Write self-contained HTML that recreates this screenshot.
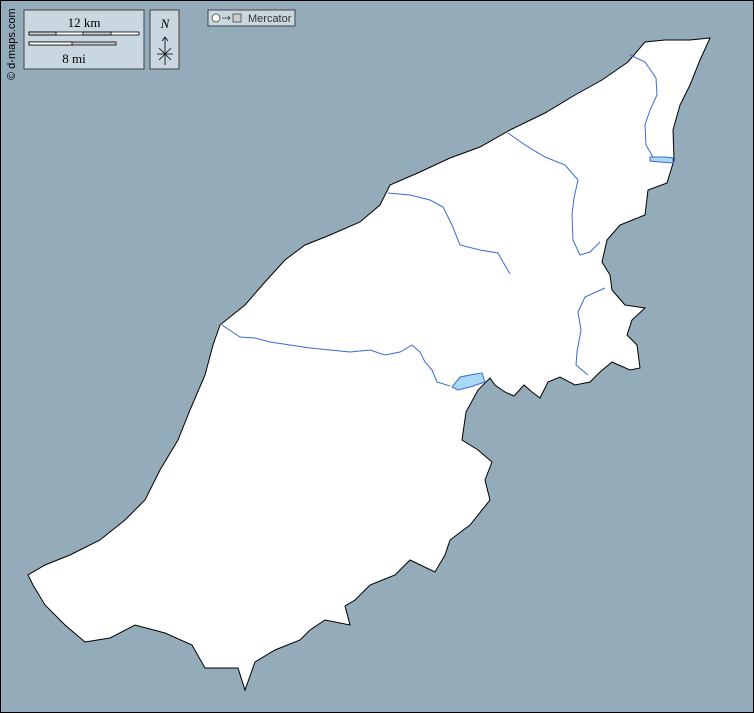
<!DOCTYPE html><html><head><meta charset="utf-8"><style>
body{margin:0}
svg{display:block}
</style></head><body>
<svg width="754" height="713" viewBox="0 0 754 713" xmlns="http://www.w3.org/2000/svg">
<rect x="0" y="0" width="754" height="713" fill="#94abba"/>
<rect x="0.5" y="0.5" width="753" height="712" fill="none" stroke="#000" stroke-width="1"/>
<path fill="#fff" stroke="#000" stroke-width="1" d="M710,38 L700,60 L690,85 L680,105 L673,130 L674,160 L667,183 L648,190 L645,215 L620,225 L607,240 L602,262 L610,275 L612,290 L625,305 L645,308 L632,320 L627,335 L637,345 L640,368 L630,370 L612,362 L600,372 L590,382 L575,385 L560,377 L548,382 L540,398 L532,392 L524,385 L514,396 L505,392 L495,385 L490,378 L478,390 L466,412 L462,440 L470,445 L478,450 L492,462 L485,480 L490,500 L470,525 L450,540 L445,555 L435,572 L410,560 L395,575 L370,585 L355,600 L345,606 L350,625 L325,620 L310,630 L300,640 L275,650 L255,662 L245,690 L238,668 L205,668 L192,645 L165,633 L135,625 L110,638 L85,642 L65,625 L45,605 L33,585 L28,575 L45,565 L70,555 L100,540 L125,520 L145,500 L160,470 L178,440 L190,410 L205,375 L213,345 L220,325 L245,305 L265,282 L285,260 L305,245 L330,235 L360,222 L380,205 L390,185 L420,172 L450,158 L480,147 L510,130 L545,113 L575,95 L602,80 L628,62 L645,42 L665,40 L690,40 Z"/>
<g fill="none" stroke="#3a6bd0" stroke-width="1">
<path d="M222,325 L240,337 L255,338 L270,342 L290,345 L310,348 L330,350 L350,352 L370,350 L385,355 L400,352 L412,345 L420,352 L425,362 L432,370 L437,382 L450,386"/>
<path d="M388,193 L410,195 L430,200 L443,207 L452,225 L460,245 L480,250 L498,253 L503,262 L510,274"/>
<path d="M508,133 L525,145 L545,157 L565,165 L578,180 L574,198 L572,215 L573,240 L580,255 L590,252 L600,242"/>
<path d="M630,55 L645,62 L656,78 L657,95 L650,110 L645,125 L646,145 L653,157"/>
<path d="M605,288 L585,297 L578,312 L581,330 L577,352 L576,365 L588,375"/>
</g>
<path fill="#a8d8f4" stroke="#3a6bd0" stroke-width="1" d="M452,387 L460,377 L475,374 L482,373 L485,382 L470,387 L458,390 Z"/>
<path fill="#a8d8f4" stroke="#3a6bd0" stroke-width="1" d="M650,157 L665,157 L673,158 L673,163 L660,162 L650,161 Z"/>
<rect x="24" y="10" width="120" height="59" fill="#c8d7e0" stroke="#444" stroke-width="1"/>
<text x="84" y="27" font-family="Liberation Serif,serif" font-size="13" text-anchor="middle">12 km</text>
<rect x="29" y="32" width="110" height="3" fill="#fff" stroke="#000" stroke-width="0.8"/>
<rect x="29" y="32" width="27" height="3" fill="#ccc" stroke="#000" stroke-width="0.8"/>
<rect x="83" y="32" width="28" height="3" fill="#ccc" stroke="#000" stroke-width="0.8"/>
<rect x="29" y="42" width="87" height="3" fill="#ccc" stroke="#000" stroke-width="0.8"/>
<rect x="29" y="42" width="43" height="3" fill="#fff" stroke="#000" stroke-width="0.8"/>
<text x="74" y="63" font-family="Liberation Serif,serif" font-size="13" text-anchor="middle">8 mi</text>
<rect x="150" y="10" width="29" height="59" fill="#c8d7e0" stroke="#444" stroke-width="1"/>
<text x="165" y="28" font-family="Liberation Serif,serif" font-size="13" font-style="italic" text-anchor="middle">N</text>
<g stroke="#000" stroke-width="0.8" fill="none"><path d="M165,37 L165,65 M162,41 L165,37 L168,41 M157,54 L173,54 M159,48 L171,60 M171,48 L159,60"/></g>
<rect x="208" y="10" width="87" height="16" fill="#c8d7e0" stroke="#444" stroke-width="1"/>
<circle cx="216" cy="18" r="4" fill="#fff" stroke="#444" stroke-width="0.8"/>
<path d="M222,18 L230,18 M228,16 L230,18 L228,20" stroke="#333" stroke-width="0.8" fill="none"/>
<rect x="233" y="14" width="8" height="8" fill="#ccc" stroke="#444" stroke-width="0.8"/>
<text x="248" y="22" font-family="Liberation Sans,sans-serif" font-size="11" fill="#333">Mercator</text>
<text transform="translate(15,80) rotate(-90)" font-family="Liberation Sans,sans-serif" font-size="11" fill="#000">© d-maps.com</text>
</svg>
</body></html>
